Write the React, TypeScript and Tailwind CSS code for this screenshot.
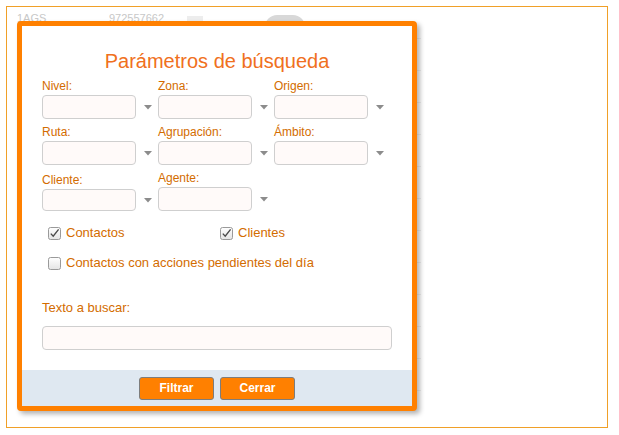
import { useState } from "react";

type FieldType = {
  label: string;
  shift?: boolean;
};

const Arrow = () => (
  <svg width="8" height="5" viewBox="0 0 8 5" className="shrink-0">
    <path d="M0 0h8L4 4.5z" fill="#8c8c8c" />
  </svg>
);

const Field = ({ label, shift }: FieldType) => (
  <div className={shift ? "flex flex-col pt-[2px]" : "flex flex-col"}>
    <label className="h-[14px] leading-[14px] text-[12px] text-[#d36c00]">{label}</label>
    <div className="mt-[2px] flex items-center">
      <input
        type="text"
        className={
          shift
            ? "h-[22px] w-[94px] rounded-[4px] border border-[#cfcfcf] bg-[#fffaf9] outline-none"
            : "h-[24px] w-[94px] rounded-[4px] border border-[#cfcfcf] bg-[#fffaf9] outline-none"
        }
      />
      <div className="ml-[8px] flex w-[8px] items-center">
        <Arrow />
      </div>
    </div>
  </div>
);

type CheckType = {
  label: string;
  defaultChecked?: boolean;
};

const Check = ({ label, defaultChecked }: CheckType) => {
  const [checked, setChecked] = useState<boolean>(!!defaultChecked);
  return (
    <label className="flex h-[14px] cursor-pointer items-center text-[13px] text-[#d36c00]">
      <span onClick={() => setChecked((p) => !p)} className="mr-[5px] flex">
        <svg width="13" height="13" viewBox="0 0 13 13">
          <defs>
            <linearGradient id="cb" x1="0" y1="0" x2="0" y2="1">
              <stop offset="0" stopColor="#ffffff" />
              <stop offset="1" stopColor="#e4e4e4" />
            </linearGradient>
          </defs>
          <rect x="0.5" y="0.5" width="12" height="12" rx="2" fill="url(#cb)" stroke="#9a9a9a" />
          {checked && (
            <path d="M2.8 6.6 5.2 9.2 10.6 2.4" fill="none" stroke="#4a4a4a" strokeWidth="1.4" />
          )}
        </svg>
      </span>
      {label}
    </label>
  );
};

const bgRows = [0, 1, 2, 3, 4, 5, 6, 7, 8, 9, 10, 11];

export default function App() {
  return (
    <div className="min-h-screen bg-white p-[6px] font-['Liberation_Sans',Arial,sans-serif]">
      <div className="relative h-[422px] w-[602px] border border-[#f0a028] bg-white">
        {/* faint table behind the modal */}
        <div className="ml-[10px] w-[404px] text-[11px] text-[#c8c8c8]">
          {bgRows.map((r) => (
            <div key={r} className="flex h-[32px] items-start border-b border-[#f1f1f1] pt-[3px]">
              {r === 0 && (
                <>
                  <span className="w-[92px]">1AGS</span>
                  <span className="w-[78px]">972557662</span>
                  <span className="mt-[6px] h-[10px] w-[16px] bg-[#ededed]" />
                  <span className="ml-[62px] mt-[5px] h-[12px] w-[40px] rounded-t-full bg-[#d8d8d8]" />
                </>
              )}
            </div>
          ))}
        </div>

        {/* dialog */}
        <div className="absolute left-[10px] top-[14px] flex h-[390px] w-[400px] flex-col rounded-[4px] border-[5px] border-[#ff8000] bg-white shadow-[3px_3px_5px_rgba(0,0,0,0.3)]">
          <h2 className="mt-[22px] h-[26px] text-center text-[20px] leading-[26px] text-[#f07020]">
            Parámetros de búsqueda
          </h2>

          <div className="mt-[5px] flex flex-col gap-y-[6px] pl-[20px]">
            <div className="flex gap-x-[6px]">
              <Field label="Nivel:" />
              <Field label="Zona:" />
              <Field label="Origen:" />
            </div>
            <div className="flex gap-x-[6px]">
              <Field label="Ruta:" />
              <Field label="Agrupación:" />
              <Field label="Ámbito:" />
            </div>
            <div className="flex gap-x-[6px]">
              <Field label="Cliente:" shift />
              <Field label="Agente:" />
            </div>
          </div>

          <div className="mt-[15px] flex pl-[26px]">
            <div className="w-[172px]">
              <Check label="Contactos" defaultChecked />
            </div>
            <Check label="Clientes" defaultChecked />
          </div>
          <div className="mt-[16px] pl-[26px]">
            <Check label="Contactos con acciones pendientes del día" />
          </div>

          <div className="mt-[30px] pl-[20px]">
            <label className="block h-[15px] text-[13px] leading-[15px] text-[#d36c00]">Texto a buscar:</label>
            <input
              type="text"
              className="mt-[11px] h-[24px] w-[350px] rounded-[4px] border border-[#cfcfcf] bg-[#fffaf9] outline-none"
            />
          </div>

          <div className="mt-auto flex h-[36px] items-center justify-center gap-x-[6px] bg-[#dfe8f1]">
            <button
              type="button"
              className="h-[23px] w-[75px] rounded-[3px] border border-[#7d7d7d] bg-[#ff8000] text-[12px] font-bold text-white"
            >
              Filtrar
            </button>
            <button
              type="button"
              className="h-[23px] w-[75px] rounded-[3px] border border-[#7d7d7d] bg-[#ff8000] text-[12px] font-bold text-white"
            >
              Cerrar
            </button>
          </div>
        </div>
      </div>
    </div>
  );
}
